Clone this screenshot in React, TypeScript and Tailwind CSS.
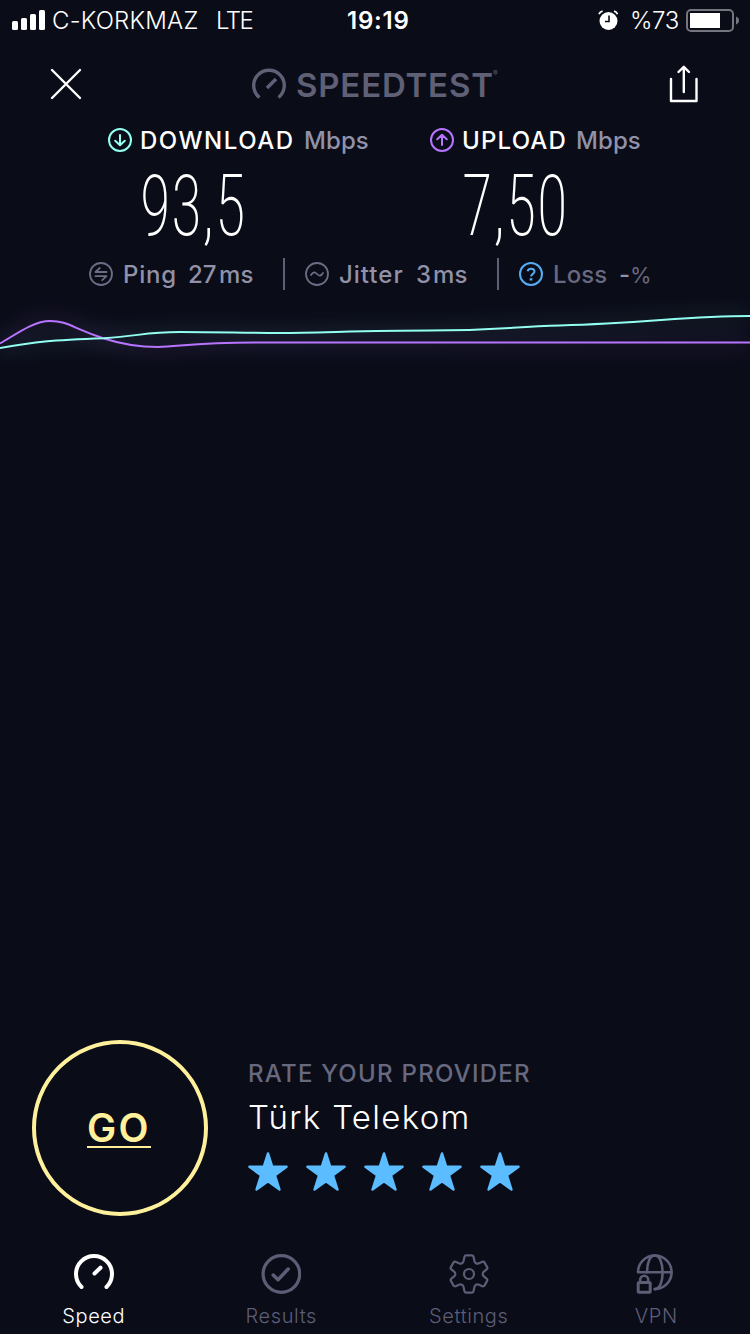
import React from 'react';

const TABS = [
    { name: 'Speed', active: true },
    { name: 'Results', active: false },
    { name: 'Settings', active: false },
    { name: 'VPN', active: false },
];

const StatusBar: React.FC = () => (
    <div className="flex h-10 items-center pl-3 text-[24px] whitespace-nowrap">
        <svg width="34" height="20" viewBox="0 0 34 20" fill="white" className="shrink-0">
            <rect x="0" y="11" width="6" height="9" rx="1.5" />
            <rect x="9" y="8" width="6" height="12" rx="1.5" />
            <rect x="18" y="4" width="6" height="16" rx="1.5" />
            <rect x="27" y="0" width="6" height="20" rx="1.5" />
        </svg>
        <span className="ml-[6px] w-[164px] pt-[2px] font-light tracking-[0.2px]">C-KORKMAZ</span>
        <span className="w-[131px] pt-[2px] font-light tracking-[-1.5px]">LTE</span>
        <span className="w-[251px] pt-[2px] font-semibold tracking-[0.8px]">19:19</span>
        <svg width="20" height="20" viewBox="0 0 20 20" className="shrink-0">
            <circle cx="10.5" cy="11" r="9" fill="white" />
            <path d="M11 5.5v6H7" fill="none" stroke="#0a0c18" strokeWidth="1.6" />
            <path d="M1 4.2Q2 1.8 4.6 1.2M19.5 4.2Q18.5 1.8 16 1.2" fill="none" stroke="white" strokeWidth="1.8" />
        </svg>
        <span className="ml-3 w-[56px] pt-[2px] font-light tracking-[-0.4px]">%73</span>
        <svg width="54" height="24" viewBox="0 0 54 24" className="shrink-0">
            <rect x="1" y="2" width="46" height="21" rx="4" fill="none" stroke="#74757d" strokeWidth="2" />
            <rect x="4" y="5" width="30" height="15" fill="white" />
            <path d="M50 8.5q3 1.2 3 4t-3 4z" fill="#74757d" />
        </svg>
    </div>
);

const Header: React.FC = () => (
    <div className="flex h-[88px] items-center pl-[50px]">
        <svg width="32" height="32" viewBox="0 0 32 32" className="shrink-0" stroke="white" strokeWidth="2.4" strokeLinecap="round">
            <path d="M2 2l28 28M30 2L2 30" />
        </svg>
        <svg width="36" height="32" viewBox="0 0 36 32" className="ml-[169px] shrink-0" fill="none" stroke="#5f6076">
            <path d="M8.5 29.5A15.3 15.3 0 1 1 27.5 29.5" strokeWidth="3.4" />
            <path d="M25 11L16 20" strokeWidth="3.6" />
        </svg>
        <div className="ml-[9px] flex w-[373px] items-start pt-[2px] text-[#5f6076]">
            <span className="w-[197px] text-[33px] leading-[38px] font-semibold tracking-[0.8px] whitespace-nowrap">SPEEDTEST</span>
            <span className="mt-1 text-[7px] leading-[8px]">®</span>
        </div>
        <svg width="30" height="38" viewBox="0 0 30 38" className="shrink-0" fill="none" stroke="white" strokeWidth="2.4" strokeLinecap="round" strokeLinejoin="round">
            <path d="M2 14v22h25.5V14M14.8 27V2M9.5 7l5.3-5.2L20 7" />
        </svg>
    </div>
);

const ArrowCircle: React.FC<{ up?: boolean; color: string }> = ({ up = false, color }) => (
    <svg width="24" height="24" viewBox="0 0 24 24" className="shrink-0" fill="none" stroke={color} strokeWidth="2" strokeLinecap="round" strokeLinejoin="round">
        <circle cx="12" cy="12" r="11" />
        <path d={up ? 'M12 17V7M7.2 11.2L12 6.8l4.8 4.4' : 'M12 7v10M7.2 12.8L12 17.2l4.8-4.4'} />
    </svg>
);

const SpeedValue: React.FC<{ value: string }> = ({ value }) => (
    <div className="mt-[19px] ml-[32px] h-[70px] w-[250px] origin-left scale-x-[0.73] font-[Roboto] text-[86px] leading-[70px] font-extralight tracking-[1px] [font-stretch:75%]">
        {value}
    </div>
);

const Speeds: React.FC = () => (
    <div className="flex h-[122px] pl-[108px]">
        <div className="w-[322px]">
            <div className="flex h-6 items-center text-[24px] leading-6 font-medium whitespace-nowrap">
                <ArrowCircle color="#93fff0" />
                <span className="ml-2 w-[164px] pt-[2px] tracking-[1.5px]">DOWNLOAD</span>
                <span className="pt-[2px] tracking-[0.1px] text-[#9191a8]">Mbps</span>
            </div>
            <SpeedValue value="93,5" />
        </div>
        <div>
            <div className="flex h-6 items-center text-[24px] leading-6 font-medium whitespace-nowrap">
                <ArrowCircle up color="#b774ff" />
                <span className="ml-2 w-[114px] pt-[2px] tracking-[1.2px]">UPLOAD</span>
                <span className="pt-[2px] tracking-[0.1px] text-[#9191a8]">Mbps</span>
            </div>
            <SpeedValue value="7,50" />
        </div>
    </div>
);

const Metrics: React.FC = () => (
    <div className="mt-[8px] flex h-8 items-center pl-[89px] text-[24px] leading-8 font-medium whitespace-nowrap text-[#9191a8]">
        <svg width="24" height="24" viewBox="0 0 24 24" className="shrink-0" fill="none" stroke="#6c6c84" strokeWidth="1.8" strokeLinecap="round" strokeLinejoin="round">
            <circle cx="12" cy="12" r="11" />
            <path d="M17.5 10h-11L10.8 6M6.5 14.2h11L13.2 18.2" />
        </svg>
        <span className="ml-[10px] w-[65px] pt-[2px] tracking-[0.8px]">Ping</span>
        <span className="w-[31px] pt-[2px]">27</span>
        <span className="w-[64px] pt-[2px] tracking-[0.3px]">ms</span>
        <span className="h-8 w-[2px] bg-[#5f6076]" />
        <svg width="24" height="24" viewBox="0 0 24 24" className="ml-5 shrink-0" fill="none" stroke="#6c6c84" strokeWidth="1.8" strokeLinecap="round">
            <circle cx="12" cy="12" r="11" />
            <path d="M6 13q2.8-4.5 6-1t6-1" />
        </svg>
        <span className="ml-[10px] w-[77px] pt-[2px] tracking-[1px]">Jitter</span>
        <span className="w-[17px] pt-[2px]">3</span>
        <span className="w-[64px] pt-[2px] tracking-[0.3px]">ms</span>
        <span className="h-8 w-[2px] bg-[#5f6076]" />
        <svg width="24" height="24" viewBox="0 0 24 24" className="ml-5 shrink-0" fill="none" stroke="#55adf5" strokeWidth="2">
            <circle cx="12" cy="12" r="11" />
            <path d="M8.6 9.2Q9.3 6.7 12 6.7c2 0 3.5 1.1 3.5 2.8 0 2.3-3.4 2.5-3.4 5" />
            <path d="M12 16.2v2.3" strokeWidth="2.6" />
        </svg>
        <span className="ml-[10px] w-[66px] pt-[2px] tracking-[0.1px] text-[#68687f]">Loss</span>
        <span className="w-[11px] pt-[2px]">-</span>
        <span className="pt-[2px] text-[22px] font-normal text-[#68687f]">%</span>
    </div>
);

const UPLOAD_LINE = 'M0 43.5C15 35 33 21 50 21C68 21 72 28 104 38.5C124 45 140 47 158 47C180 46.5 195 42.5 255 42.5H750';
const DOWNLOAD_LINE = 'M0 48C35 42 50 40 104 38.2C140 36 145 32 180 32C220 32 245 33 280 33C320 32.8 370 30.5 430 30.5C495 30.5 510 27 560 25.5C650 23 685 16 750 16';

const SpeedGraph: React.FC = () => (
    <svg width="750" height="80" viewBox="0 0 750 80" fill="none" className="mt-[10px] block shrink-0">
        <defs>
            <filter id="glow" x="-5%" y="-150%" width="110%" height="400%">
                <feGaussianBlur stdDeviation="10" />
            </filter>
        </defs>
        <path d={UPLOAD_LINE} stroke="#b774ff" strokeWidth="18" opacity="0.07" filter="url(#glow)" />
        <path d={DOWNLOAD_LINE} stroke="#93fff0" strokeWidth="18" opacity="0.05" filter="url(#glow)" />
        <path d={UPLOAD_LINE} stroke="#b774ff" strokeWidth="2" />
        <path d={DOWNLOAD_LINE} stroke="#93fff0" strokeWidth="2" />
    </svg>
);

const Provider: React.FC = () => (
    <div className="flex h-[176px] pl-8">
        <button className="flex h-[176px] w-[176px] items-center justify-center rounded-full border-4 border-[#fff09b] pr-[2px] text-[#fff09b]">
            <span className="h-[39px] w-[64px] border-b-2 border-[#fff09b] text-[39px] leading-[37px] font-semibold tracking-[2.4px] whitespace-nowrap">GO</span>
        </button>
        <div className="ml-10 pt-[18px] whitespace-nowrap">
            <div className="h-8 text-[24px] leading-8 font-medium tracking-[1.25px] text-[#68687f]">RATE YOUR PROVIDER</div>
            <div className="mt-[5px] mb-[13px] h-11 text-[33px] leading-11 font-light tracking-[1.3px]">Türk Telekom</div>
            <div className="flex gap-[18px]">
                {[1, 2, 3, 4, 5].map((n) => (
                    <svg key={n} width="40" height="40" viewBox="0 0 40 40" fill="#5bbcff" stroke="#5bbcff" strokeWidth="2.4" strokeLinejoin="round">
                        <path d="M20 1.4l4.3 13.4H38.6L27 23.3 31.5 37.5 20 29.3 8.5 37.5l4.5-14.2L1.4 14.8h14.3z" />
                    </svg>
                ))}
            </div>
        </div>
    </div>
);

const TabIcon: React.FC<{ name: string }> = ({ name }) => (
    <svg width="40" height="40" viewBox="0 0 40 40" fill="none" stroke="currentColor" strokeLinecap="round" strokeLinejoin="round">
        {name === 'Speed' && (
            <>
                <path d="M7.5 33A18 18 0 1 1 32.5 33" strokeWidth="4" />
                <path d="M20.5 19.5l6-5.8" strokeWidth="4" />
            </>
        )}
        {name === 'Results' && (
            <>
                <circle cx="20.4" cy="20" r="18.3" strokeWidth="3.2" />
                <path d="M12.2 21l4.8 4.7L27.2 15" strokeWidth="3.5" />
            </>
        )}
        {name === 'Settings' && (
            <g strokeWidth="2.2">
                <path d="M17.2 1.3h5.6q1.4 0 1.7 1.5l1 4.5q.3 1.3 1.5 2 1.2.7 2.4.2l4-1.7q1.4-.4 2.2.8l2.5 4.5q.7 1.4-.5 2.3l-3 2.5q-.9.8-.9 2.1t.9 2.1l3 2.5q1.2.9.5 2.3l-2.5 4.5q-.8 1.2-2.2.8l-4-1.7q-1.2-.5-2.4.2-1.2.7-1.5 2l-1 4.5q-.3 1.5-1.7 1.5h-5.6q-1.4 0-1.7-1.5l-1-4.5q-.3-1.3-1.5-2-1.2-.7-2.4-.2l-4 1.7q-1.4.4-2.2-.8l-2.5-4.5q-.7-1.4.5-2.3l3-2.5q.9-.8.9-2.1t-.9-2.1l-3-2.5q-1.2-.9-.5-2.3l2.5-4.5q.8-1.2 2.2-.8l4 1.7q1.2.5 2.4-.2 1.2-.7 1.5-2l1-4.5q.3-1.5 1.7-1.5z" />
                <circle cx="20" cy="20" r="5" />
            </g>
        )}
        {name === 'VPN' && (
            <g strokeWidth="2.6">
                <path d="M2 18.3A16.8 16.8 0 0 1 35.6 18.3A16.8 16.8 0 0 1 18.8 35.1M2 18.3h33.6" />
                <path d="M11 18.3C11 9 13.8 1.5 18.8 1.5S26.6 9 26.6 18.3 23.8 35.1 18.8 35.1" />
                <rect x="2.2" y="28.5" width="12" height="9.8" rx="1" strokeWidth="3" />
                <path d="M4.2 27.5v-1.7a4 4 0 0 1 8 0v1.7" />
            </g>
        )}
    </svg>
);

const App: React.FC = () => {
    return (
        <div className="flex h-[1334px] w-[750px] flex-col overflow-hidden bg-[#0a0c18] font-[Inter,'Liberation_Sans',sans-serif] text-white">
            <StatusBar />
            <Header />
            <Speeds />
            <Metrics />
            <SpeedGraph />
            <main className="flex-1" />
            <Provider />
            <nav className="mt-[38px] grid h-20 grid-cols-4">
                {TABS.map((tab) => (
                    <button key={tab.name} className={`flex flex-col items-center ${tab.active ? 'text-white' : 'text-[#5d5d76]'}`}>
                        <TabIcon name={tab.name} />
                        <span className="mt-2 text-[20px] leading-7 font-light tracking-[0.6px]">{tab.name}</span>
                    </button>
                ))}
            </nav>
        </div>
    );
};

export default App;
